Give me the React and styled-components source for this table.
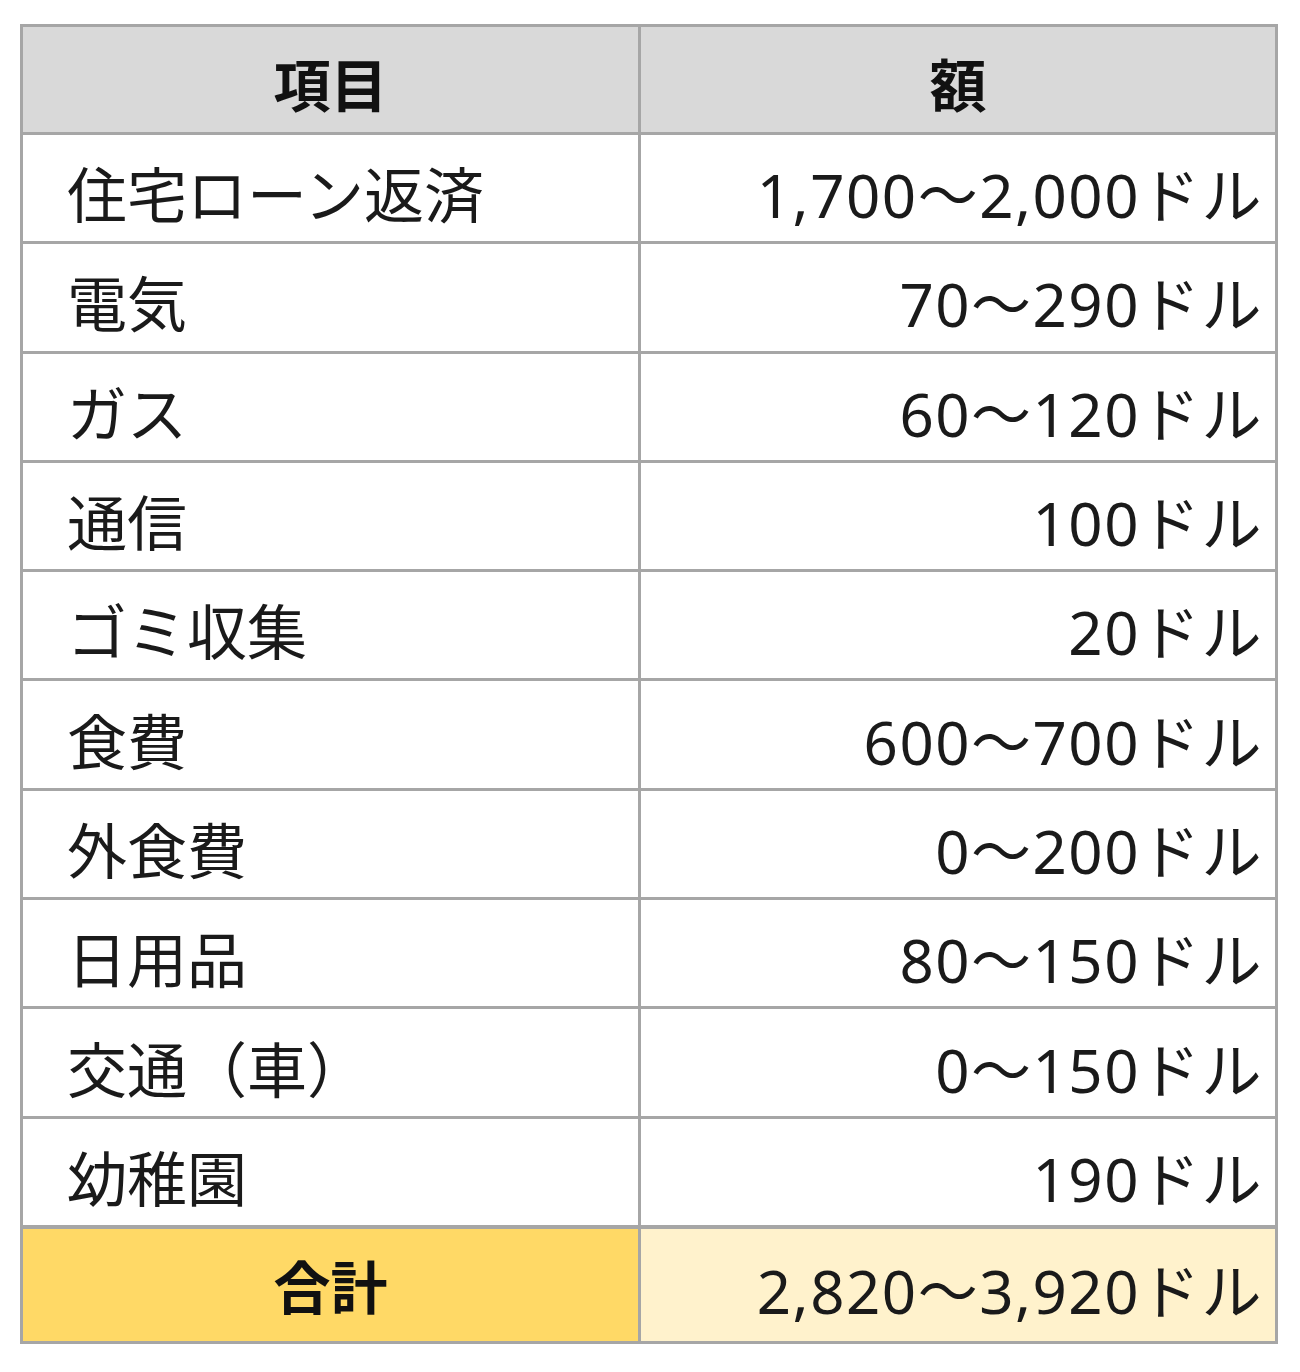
import React from "react";
import styled, { createGlobalStyle } from "styled-components";

const GlobalStyle = createGlobalStyle`
  html, body {
    margin: 0;
    padding: 0;
    background: #ffffff;
  }
  body {
    font-family: "Noto Sans", "Noto Sans CJK JP", sans-serif;
    color: #1a1a1a;
  }
`;

const Page = styled.div`
  padding: 24px 0 0 20px;
`;

const Table = styled.table`
  border-collapse: collapse;
  table-layout: fixed;
  width: 1255px;
  font-size: 60px;
  line-height: 1;
`;

const HeadCell = styled.th`
  background: #d9d9d9;
  border: 3px solid #a6a6a6;
  height: 93px;
  padding: 12px 0 0 0;
  font-weight: 700;
  font-size: 57px;
  text-align: center;
  color: #111;
`;

const Cell = styled.td`
  border: 3px solid #a6a6a6;
  height: 92.3px;
  padding: ${p => (p.$right ? "14px 12px 0 0" : "14px 0 0 44px")};
  text-align: ${p => (p.$right ? "right" : "left")};
  white-space: nowrap;
  font-weight: 400;
  letter-spacing: ${p => (p.$right ? "1.5px" : "0")};
`;

const TotalLabel = styled.td`
  background: #ffd966;
  border: 3px solid #a6a6a6;
  border-top-width: 4px;
  height: 106px;
  padding: 6px 0 0 0;
  text-align: center;
  font-weight: 700;
  font-size: 57px;
  color: #111;
`;

const TotalValue = styled(Cell)`
  background: #fff2cc;
  border-top-width: 4px;
  height: 100px;
  padding-top: 12px;
`;

const rows = [
  ["住宅ローン返済", "1,700〜2,000ドル"],
  ["電気", "70〜290ドル"],
  ["ガス", "60〜120ドル"],
  ["通信", "100ドル"],
  ["ゴミ収集", "20ドル"],
  ["食費", "600〜700ドル"],
  ["外食費", "0〜200ドル"],
  ["日用品", "80〜150ドル"],
  ["交通（車）", "0〜150ドル"],
  ["幼稚園", "190ドル"],
];

export default function App() {
  return (
    <Page>
      <GlobalStyle />
      <Table>
        <colgroup>
          <col style={{ width: 618 }} />
          <col style={{ width: 637 }} />
        </colgroup>
        <thead>
          <tr>
            <HeadCell>項目</HeadCell>
            <HeadCell>額</HeadCell>
          </tr>
        </thead>
        <tbody>
          {rows.map(([item, amount]) => (
            <tr key={item}>
              <Cell>{item}</Cell>
              <Cell $right>{amount}</Cell>
            </tr>
          ))}
          <tr>
            <TotalLabel>合計</TotalLabel>
            <TotalValue $right>2,820〜3,920ドル</TotalValue>
          </tr>
        </tbody>
      </Table>
    </Page>
  );
}
